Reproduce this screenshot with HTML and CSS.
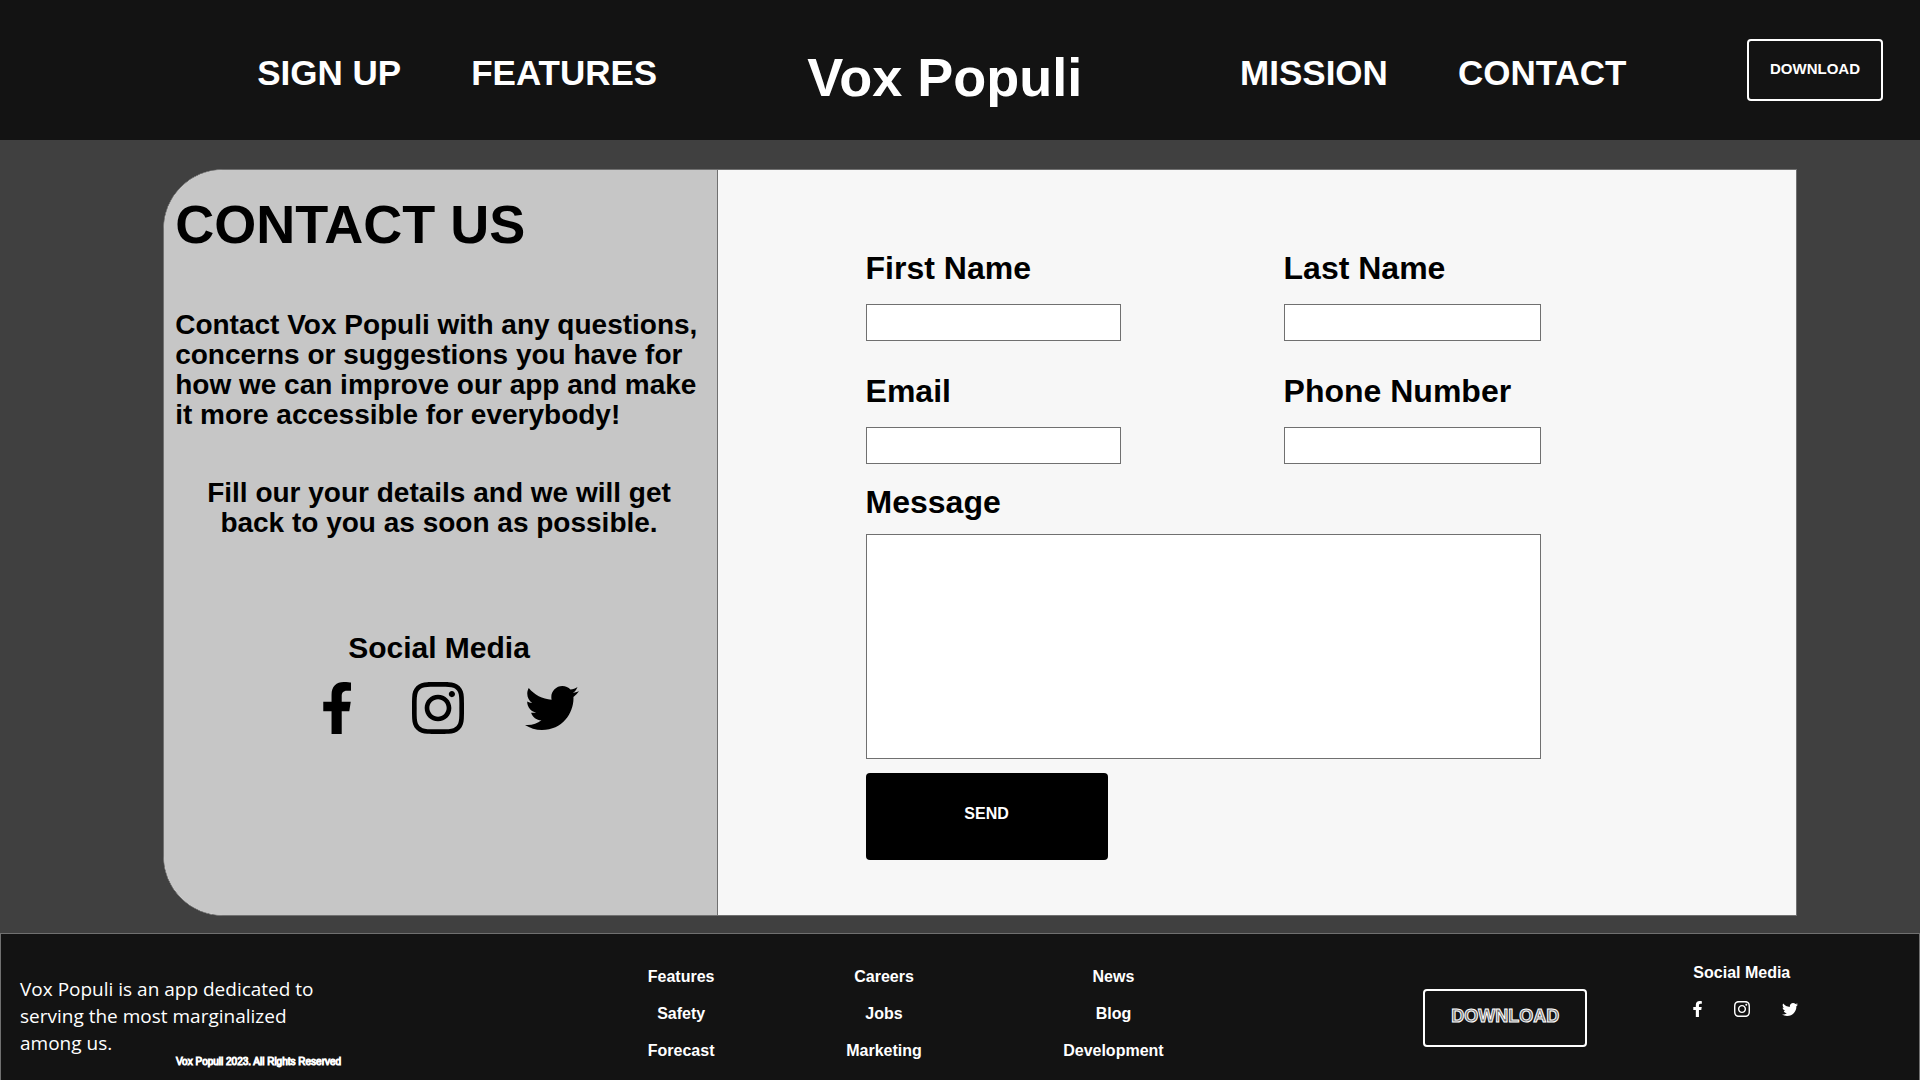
FILE: index.html
```html
<!DOCTYPE html>
<html lang="en">
<head>
<meta charset="utf-8">
<meta name="viewport" content="width=device-width, initial-scale=1">
<title>Vox Populi - Contact</title>
<link rel="stylesheet" href="styles.css">
</head>
<body>
<svg class="sprite" aria-hidden="true">
  <symbol id="facebook" viewBox="22 0 272 512"><path d="M279.14 288l14.22-92.66h-88.91v-60.13c0-25.35 12.42-50.06 52.24-50.06h40.42V6.26S260.43 0 225.36 0c-73.22 0-121.08 44.38-121.08 124.72v70.62H22.89V288h81.39v224h100.17V288z"/></symbol>
  <symbol id="instagram" viewBox="0 32 448 448"><path d="M224.1 141c-63.6 0-114.9 51.3-114.9 114.9s51.3 114.9 114.9 114.9S339 319.5 339 255.9 287.7 141 224.1 141zm0 189.6c-41.1 0-74.7-33.5-74.7-74.7s33.5-74.7 74.7-74.7 74.7 33.5 74.7 74.7-33.6 74.7-74.7 74.7zm146.4-194.3c0 14.9-12 26.8-26.8 26.8-14.9 0-26.8-12-26.8-26.8s12-26.8 26.8-26.8 26.8 12 26.8 26.8zm76.1 27.2c-1.7-35.9-9.9-67.7-36.2-93.9-26.2-26.2-58-34.4-93.9-36.2-37-2.1-147.9-2.1-184.9 0-35.8 1.7-67.6 9.9-93.9 36.1s-34.4 58-36.2 93.9c-2.1 37-2.1 147.9 0 184.9 1.7 35.9 9.9 67.7 36.2 93.9s58 34.4 93.9 36.2c37 2.1 147.9 2.1 184.9 0 35.9-1.7 67.7-9.9 93.9-36.2 26.2-26.2 34.4-58 36.2-93.9 2.1-37 2.1-147.8 0-184.8zM398.8 388c-7.8 19.6-22.9 34.7-42.6 42.6-29.5 11.7-99.5 9-132.1 9s-102.7 2.6-132.1-9c-19.6-7.8-34.7-22.9-42.6-42.6-11.7-29.5-9-99.5-9-132.1s-2.6-102.7 9-132.1c7.8-19.6 22.9-34.7 42.6-42.6 29.5-11.7 99.5-9 132.1-9s102.7-2.6 132.1 9c19.6 7.8 34.7 22.9 42.6 42.6 11.7 29.5 9 99.5 9 132.1s2.7 102.7-9 132.1z"/></symbol>
  <symbol id="twitter" viewBox="0 48 512 416"><path d="M459.37 151.716c.325 4.548.325 9.097.325 13.645 0 138.72-105.583 298.558-298.558 298.558-59.452 0-114.68-17.219-161.137-47.106 8.447.974 16.568 1.299 25.34 1.299 49.055 0 94.213-16.568 130.274-44.832-46.132-.975-84.792-31.188-98.112-72.772 6.498.974 12.995 1.624 19.818 1.624 9.421 0 18.843-1.3 27.614-3.573-48.081-9.747-84.143-51.98-84.143-102.985v-1.299c13.969 7.797 30.214 12.67 47.431 13.319-28.264-18.843-46.781-51.005-46.781-87.391 0-19.492 5.197-37.36 14.294-52.954 51.655 63.675 129.3 105.258 216.365 109.807-1.624-7.797-2.599-15.918-2.599-24.04 0-57.828 46.782-104.934 104.934-104.934 30.213 0 57.502 12.67 76.67 33.137 23.715-4.548 46.456-13.32 66.599-25.34-7.798 24.366-24.366 44.833-46.132 57.827 21.117-2.273 41.584-8.122 60.426-16.243-14.292 20.791-32.161 39.308-52.628 54.253z"/></symbol>
</svg>

<header class="header">
  <nav class="nav" aria-label="Get started">
    <a href="#">SIGN UP</a>
    <a href="#">FEATURES</a>
  </nav>
  <a class="logo" href="#">Vox Populi</a>
  <nav class="nav" aria-label="About">
    <a href="#">MISSION</a>
    <a href="#">CONTACT</a>
  </nav>
  <button class="download" type="button">DOWNLOAD</button>
</header>

<main class="main">
  <section class="card">
    <div class="intro">
      <h1>CONTACT US</h1>
      <p class="lead">Contact Vox Populi with any questions, concerns or suggestions you have for how we can improve our app and make it more accessible for everybody!</p>
      <p class="details">Fill our your details and we will get back to you as soon as possible.</p>
      <h2>Social Media</h2>
      <div class="social">
        <a href="#" aria-label="Facebook"><svg class="facebook"><use href="#facebook"/></svg></a>
        <a href="#" aria-label="Instagram"><svg class="instagram"><use href="#instagram"/></svg></a>
        <a href="#" aria-label="Twitter"><svg class="twitter"><use href="#twitter"/></svg></a>
      </div>
    </div>
    <form class="form">
      <div class="fields">
        <div class="field"><label for="first">First Name</label><input id="first" type="text"></div>
        <div class="field"><label for="last">Last Name</label><input id="last" type="text"></div>
        <div class="field"><label for="email">Email</label><input id="email" type="email"></div>
        <div class="field"><label for="phone">Phone Number</label><input id="phone" type="tel"></div>
      </div>
      <div class="message"><label for="message">Message</label><textarea id="message"></textarea></div>
      <button class="send" type="submit">SEND</button>
    </form>
  </section>
</main>

<footer class="footer">
  <div class="about">
    <p>Vox Populi is an app dedicated to serving the most marginalized among us.</p>
    <small>Vox Populi 2023. All Rights Reserved</small>
  </div>
  <ul class="links">
    <li><a href="#">Features</a></li>
    <li><a href="#">Safety</a></li>
    <li><a href="#">Forecast</a></li>
  </ul>
  <ul class="links">
    <li><a href="#">Careers</a></li>
    <li><a href="#">Jobs</a></li>
    <li><a href="#">Marketing</a></li>
  </ul>
  <ul class="links">
    <li><a href="#">News</a></li>
    <li><a href="#">Blog</a></li>
    <li><a href="#">Development</a></li>
  </ul>
  <button class="download download-outline" type="button">DOWNLOAD</button>
  <div class="follow">
    <h2>Social Media</h2>
    <div class="social social-small">
      <a href="#" aria-label="Facebook"><svg class="facebook"><use href="#facebook"/></svg></a>
      <a href="#" aria-label="Instagram"><svg class="instagram"><use href="#instagram"/></svg></a>
      <a href="#" aria-label="Twitter"><svg class="twitter"><use href="#twitter"/></svg></a>
    </div>
  </div>
</footer>
</body>
</html>
```
FILE: styles.css
```css
* {
  box-sizing: border-box;
  margin: 0;
  padding: 0;
}

body {
  display: flex;
  flex-direction: column;
  min-height: 100vh;
  background: #404040;
  color: #000;
  font-family: "Liberation Sans", Arial, sans-serif;
  font-weight: bold;
}

a {
  color: inherit;
  text-decoration: none;
}

svg {
  display: block;
  fill: currentColor;
}

.sprite {
  display: none;
}

.header {
  display: grid;
  grid-template-columns: 550fr 433fr 507fr 136px;
  align-items: center;
  min-height: 140px;
  padding: 0 37px 0 13.4%;
  background: #131313;
  color: #fff;
}

.nav {
  display: flex;
  gap: 70px;
  padding-top: 6px;
  font-size: 35px;
  line-height: 40px;
}

.logo {
  padding-top: 14px;
  font-size: 54px;
  line-height: 62px;
}

.download {
  height: 62px;
  padding-bottom: 4px;
  border: 2px solid #fff;
  border-radius: 4px;
  background: transparent;
  color: #fff;
  font: bold 15px "Liberation Sans", Arial, sans-serif;
}

.main {
  flex: 1;
  padding: 29px 6.4% 17px 8.5%;
}

.card {
  display: grid;
  grid-template-columns: 554fr 1079fr;
  min-height: 747px;
  border: 1px solid #707070;
  border-radius: 60px 0 0 60px;
  background: #f7f7f7;
  overflow: hidden;
}

.intro {
  padding: 23px 14px 24px 11px;
  border-right: 1px solid #707070;
  background: #c6c6c6;
}

.intro h1 {
  font-size: 54px;
  line-height: 62px;
}

.lead,
.details {
  font-size: 28px;
  line-height: 30px;
}

.lead {
  margin-top: 55px;
}

.details {
  margin: 48px 20px 0;
  text-align: center;
}

.intro h2 {
  margin-top: 93px;
  font-size: 30px;
  line-height: 34px;
  text-align: center;
}

.social {
  display: flex;
  justify-content: center;
  align-items: center;
  gap: 61px;
  margin-top: 17px;
  padding-left: 24px;
}

.facebook { width: 28px; height: 52px; }
.instagram { width: 52px; height: 52px; }
.twitter { width: 54px; height: 44px; }

.form {
  padding: 78px 23.7% 40px 13.7%;
}

.fields {
  display: grid;
  grid-template-columns: 255fr 257fr;
  column-gap: 163px;
  row-gap: 30px;
}

label {
  display: block;
  font-size: 32px;
  line-height: 40px;
}

input,
textarea {
  display: block;
  width: 100%;
  border: 1px solid #707070;
  background: #fff;
  font: 20px "Liberation Sans", Arial, sans-serif;
  resize: none;
}

input {
  height: 37px;
  margin-top: 16px;
  padding: 0 8px;
}

.message {
  margin-top: 18px;
}

textarea {
  height: 225px;
  margin-top: 12px;
  padding: 8px;
}

.send {
  width: 242px;
  height: 87px;
  margin-top: 14px;
  padding-bottom: 6px;
  border: 0;
  border-radius: 4px;
  background: #000;
  color: #fff;
  font: bold 16px "Liberation Sans", Arial, sans-serif;
}

.footer {
  display: grid;
  grid-template-columns: 560fr 203fr 203fr 256fr 346fr 332fr;
  min-height: 147px;
  padding-left: 19px;
  border: 1px solid #707070;
  border-bottom: 0;
  background: #131313;
  color: #fff;
}

.about {
  padding-top: 42px;
}

.about p {
  width: 320px;
  font: 19px/27px "Open Sans", "Noto Sans", sans-serif;
}

.about small {
  display: block;
  padding-left: 156px;
  font-size: 10px;
  font-weight: normal;
  line-height: 10px;
  -webkit-text-stroke: 1px #fff;
}

.links {
  padding-top: 24px;
  font-size: 16px;
  line-height: 37px;
  list-style: none;
  text-align: center;
}

.footer .download {
  justify-self: end;
  width: 164px;
  height: 58px;
  margin-top: 55px;
}

.download-outline {
  color: #707070;
  font-size: 18px;
  -webkit-text-stroke: 1px #fff;
}

.follow {
  justify-self: start;
  margin: 29px 0 0 32%;
}

.follow h2 {
  font-size: 16px;
  line-height: 20px;
}

.social-small {
  justify-content: flex-start;
  gap: 32px;
  margin-top: 18px;
  padding: 0;
}

.social-small .facebook { width: 9px; height: 16px; }
.social-small .instagram { width: 16px; height: 16px; }
.social-small .twitter { width: 16px; height: 13px; }
```
